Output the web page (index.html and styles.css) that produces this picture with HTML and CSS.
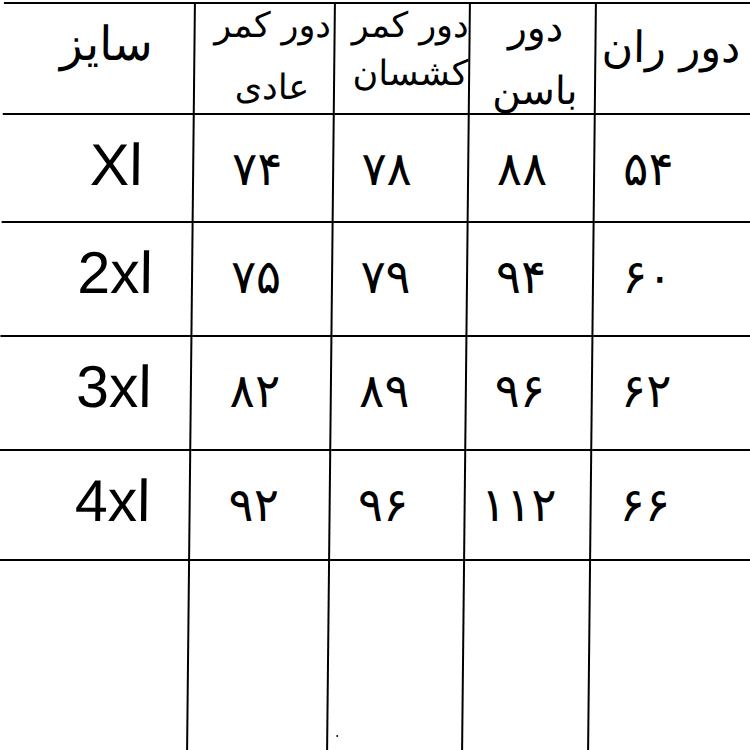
FILE: index.html
```html
<!DOCTYPE html>
<html lang="fa">
<head>
<meta charset="utf-8">
<title>جدول سایز</title>
<link rel="stylesheet" href="styles.css">
</head>
<body>
<div class="sheet">
  <div class="cell head h0"><span class="fa">سایز</span></div>
  <div class="cell head h1"><span class="fa">دور کمر</span><span class="fa">عادی</span></div>
  <div class="cell head h2"><span class="fa">دور کمر</span><span class="fa">کشسان</span></div>
  <div class="cell head h3"><span class="fa">دور</span><span class="fa">باسن</span></div>
  <div class="cell head h4"><span class="fa">دور ران</span></div>

  <div class="cell size">Xl</div>
  <div class="cell num c1">۷۴</div>
  <div class="cell num c2">۷۸</div>
  <div class="cell num c3">۸۸</div>
  <div class="cell num c4">۵۴</div>

  <div class="cell size">2xl</div>
  <div class="cell num c1">۷۵</div>
  <div class="cell num c2">۷۹</div>
  <div class="cell num c3">۹۴</div>
  <div class="cell num c4">۶۰</div>

  <div class="cell size">3xl</div>
  <div class="cell num c1">۸۲</div>
  <div class="cell num c2">۸۹</div>
  <div class="cell num c3">۹۶</div>
  <div class="cell num c4">۶۲</div>

  <div class="cell size">4xl</div>
  <div class="cell num c1">۹۲</div>
  <div class="cell num c2">۹۶</div>
  <div class="cell num c3">۱۱۲</div>
  <div class="cell num c4">۶۶</div>

  <div class="cell empty"></div>
  <div class="cell empty"></div>
  <div class="cell empty dotted"><span class="speck"></span></div>
  <div class="cell empty"></div>
  <div class="cell empty"></div>
</div>
</body>
</html>
```

FILE: styles.css
```css
html, body {
  margin: 0;
  padding: 0;
  background: #fff;
  overflow: hidden;
}
body {
  width: 750px;
  height: 750px;
  color: #000;
  font-family: "DejaVu Sans", sans-serif;
}
.sheet {
  display: grid;
  width: 762px;
  margin-top: 2px;
  grid-template-columns: 192px 140px 135px 126px 1fr;
  grid-template-rows: 111px 108px 114px 114px 110px 200px;
  border-top: 2px solid #000;
  transform: skewX(-0.6deg);
  transform-origin: 50% 375px;
}
.cell {
  box-sizing: border-box;
  border-right: 2px solid #000;
  border-bottom: 2px solid #000;
  display: flex;
  min-width: 0;
}
.cell:nth-child(5n) {
  border-right: none;
}
.fa {
  font-family: "DejaVu Sans", sans-serif;
  direction: rtl;
  white-space: nowrap;
  line-height: 1;
}
.head {
  flex-direction: column;
  align-items: center;
}
.h0 {
  justify-content: center;
  padding-left: 16px;
  padding-bottom: 30px;
}
.h0 .fa { font-size: 47px; }
.h1 {
  padding-top: 4px;
  padding-left: 16px;
  gap: 27px;
}
.h1 .fa { font-size: 35px; }
.h2 {
  align-items: flex-end;
  padding-top: 4px;
  gap: 13px;
}
.h2 .fa { font-size: 35px; }
.h3 {
  padding-top: 4px;
  padding-left: 6px;
  gap: 24px;
}
.h3 .fa { font-size: 39px; }
.h4 {
  justify-content: center;
  padding-bottom: 22px;
  padding-right: 20px;
}
.h4 .fa { font-size: 43px; }

.size {
  font-family: "Liberation Sans", Arial, sans-serif;
  font-size: 59px;
  line-height: 1;
  justify-content: center;
  padding-left: 38px;
  padding-top: 21px;
}
.num {
  font-family: "DejaVu Sans", sans-serif;
  font-size: 47px;
  line-height: 1;
  letter-spacing: 6px;
  direction: rtl;
  padding-top: 30px;
}
.c1 { justify-content: center; padding-right: 12px; }
.c2 { justify-content: center; padding-right: 28px; }
.c3 { justify-content: center; padding-right: 18px; }
.c4 { justify-content: flex-end; padding-left: 28px; }

.dotted {
  align-items: flex-end;
}
.speck {
  width: 2px;
  height: 2px;
  background: #000;
  border-radius: 50%;
  margin: 0 0 22px 8px;
}
```
